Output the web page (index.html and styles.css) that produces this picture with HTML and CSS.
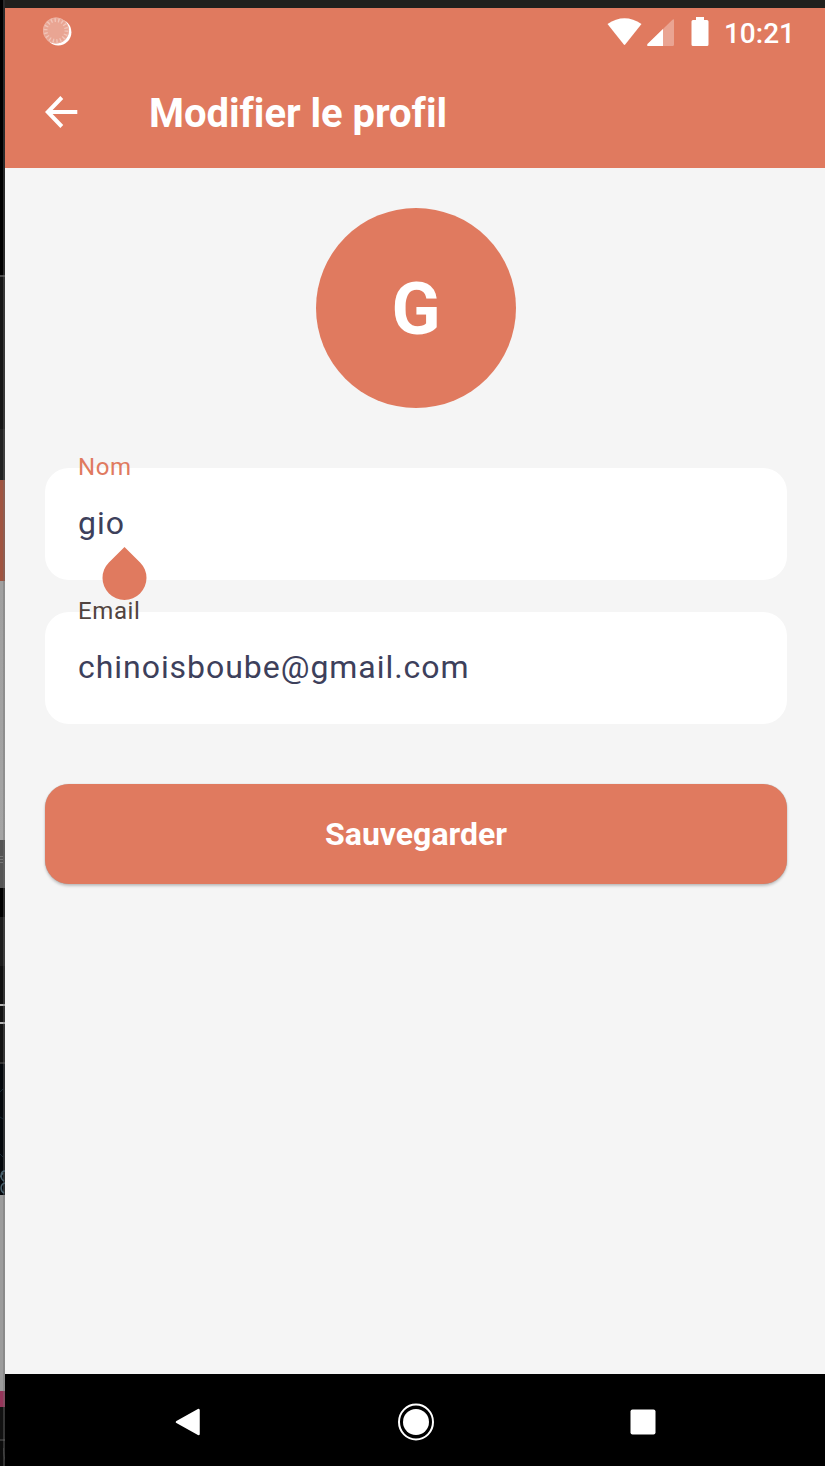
FILE: index.html
```html
<!DOCTYPE html>
<html lang="fr">
<head>
<meta charset="utf-8">
<title>Modifier le profil</title>
<link rel="stylesheet" href="styles.css">
</head>
<body>
<div class="desktop">
  <div class="backdrop">
    <svg class="backdrop-detail" width="5" height="1466" fill="none">
      <path d="M0 856.500h3M0 859.500h3M0 862.500h3" stroke="#777"/>
      <path d="M5 1171c-5 0-5 8-1 10M5 1183c-5 1-5 8-1 10M0 1177l3-4" stroke="#49616d" stroke-width="1.500"/>
      <path d="M0 1092l3-3M0 1117l3 2M0 1154l3 3" stroke="#172730"/>
      <path d="M3.500 1448C3.500 1457 5 1462 9 1466" stroke="#444"/>
    </svg>
  </div>
  <div class="phone">
    <div class="bezel"></div>
    <header class="top">
      <div class="status">
        <svg class="sync" width="30" height="30" viewBox="0 0 30 30">
          <circle cx="15.200" cy="15.200" r="13.200" fill="#fff"/>
          <circle cx="13" cy="13.500" r="13" fill="#e9a593"/>
          <circle cx="13" cy="13.500" r="10.500" fill="none" stroke="#f1c5b9" stroke-width="4" stroke-dasharray="1.400 2.265"/>
          <circle cx="13" cy="13.500" r="12.600" fill="none" stroke="#edb5a6" stroke-width=".8"/>
        </svg>
        <svg class="signals" width="104" height="32" viewBox="0 0 104 32">
          <path d="M.5 7Q17.500-4.500 34.500 7L18.200 27.500q-.7.800-1.400 0Z" fill="#fff"/>
          <path d="M67 3.200Q67 1.500 65.500 2.800L40.500 27q-1 2 .5 2H65.500q1.500 0 1.500-1.500Z" fill="#fff" fill-opacity=".32"/>
          <path d="M56 12L40.500 27q-1 2 .5 2H56Z" fill="#fff"/>
          <path d="M89 0h8v3h3q1.500 0 1.500 1.500v23q0 1.500-1.500 1.500H86q-1.500 0-1.500-1.500v-23Q84.500 3 86 3h3Z" fill="#fff"/>
        </svg>
        <span class="time">10:21</span>
      </div>
      <div class="toolbar">
        <svg class="back" width="34" height="34" viewBox="0 0 34 34" fill="none" stroke="#fff" stroke-width="4">
          <path d="M33.300 17H5M17.800 2.500L3.800 17 17.800 31.500"/>
        </svg>
        <h1 class="title">Modifier le profil</h1>
      </div>
    </header>
    <main class="content">
      <div class="avatar">G</div>
      <div class="field">
        <span class="label label-active">Nom</span>
        <span class="value">gio</span>
        <svg class="cursor-handle" width="45" height="54" viewBox="0 0 45 54"><path d="M22.500 0L38.100 15.400A22 22 0 1 1 6.900 15.400Z" fill="#e07a5f"/></svg>
      </div>
      <div class="field">
        <span class="label">Email</span>
        <span class="value">chinoisboube@gmail.com</span>
      </div>
      <button class="save">Sauvegarder</button>
    </main>
    <nav class="nav">
      <svg width="26" height="28" viewBox="0 0 26 28"><path d="M2 14L23.500 2V26Z" fill="#fff" stroke="#fff" stroke-width="2.500" stroke-linejoin="round"/></svg>
      <svg width="38" height="38" viewBox="0 0 38 38"><ellipse cx="19" cy="19" rx="17" ry="17.500" fill="none" stroke="#fff" stroke-width="2"/><circle cx="19" cy="19" r="13" fill="#fff"/></svg>
      <svg width="26" height="26" viewBox="0 0 26 26"><rect x=".5" y=".5" width="25" height="25" rx="2" fill="#fff"/></svg>
    </nav>
  </div>
</div>
</body>
</html>
```

FILE: styles.css
```css
* { box-sizing: border-box; }
body {
  margin: 0;
  font-family: Roboto, "Liberation Sans", sans-serif;
  background: #000;
}
.desktop {
  display: grid;
  grid-template-columns: 5px 1fr;
  height: 1466px;
  overflow: hidden;
}
.backdrop {
  background:
    linear-gradient(90deg, transparent 3px, rgba(110, 110, 110, .38) 3px),
    linear-gradient(#000 275px, #4a4a4a 275px 277px, #161616 277px 429px, #222 429px 480px,
      #a05440 480px 581px, #a0a0a0 581px, #a4a4a4 840px, #555 840px 888px, #000 888px 917px,
      #1c1c1c 917px 966px, #101010 966px 1004px, #b5b5b5 1004px 1006px, #131313 1006px 1022px,
      #b5b5b5 1022px 1024px, #131313 1024px 1062px, #333 1062px 1064px, #04080c 1064px 1195px,
      #9c9c9c 1195px 1391px, #953459 1391px 1407px, #111 1407px 1439px, #333 1439px 1441px, #0c0c0c 1441px);
}
.backdrop-detail { display: block; }
.phone {
  display: flex;
  flex-direction: column;
  background: #f5f5f5;
  min-width: 0;
}
.bezel { height: 8px; background: #21201d; }
.top { height: 160px; background: #e07a5f; color: #fff; }
.status {
  display: flex;
  align-items: flex-start;
  height: 48px;
  padding: 9px 30px 0 38px;
}
.signals { margin-left: auto; }
.time {
  margin-left: 13px;
  font-size: 28px;
  font-weight: 500;
  line-height: 33px;
}
.toolbar {
  display: flex;
  align-items: center;
  height: 112px;
  padding: 0 0 0 39px;
}
.back { margin-top: -1px; }
.title {
  margin: 3px 0 0 71px;
  font-size: 40px;
  font-weight: 700;
  line-height: 48px;
  letter-spacing: -.03px;
}
.content {
  flex: 1;
  display: flex;
  flex-direction: column;
  padding: 40px 38px 0 40px;
}
.avatar {
  display: flex;
  align-items: center;
  justify-content: center;
  align-self: center;
  width: 200px;
  height: 200px;
  margin-bottom: 60px;
  padding-top: 2px;
  border-radius: 50%;
  background: #e07a5f;
  color: #fff;
  font-size: 72px;
  font-weight: 700;
}
.field {
  position: relative;
  display: flex;
  align-items: center;
  height: 111.5px;
  margin-bottom: 32.5px;
  padding: 0 0 2px 33px;
  border-radius: 24px;
  background: #fff;
}
.label {
  position: absolute;
  left: 33px;
  top: -15px;
  color: #51443f;
  font-size: 24px;
  line-height: 28px;
  letter-spacing: .6px;
}
.label-active { color: #e07a5f; }
.value {
  color: #3d405b;
  font-size: 32px;
  line-height: 40px;
  letter-spacing: .96px;
}
.cursor-handle {
  position: absolute;
  left: 57px;
  top: 79px;
  z-index: 1;
}
.save {
  height: 100px;
  margin-top: 27.500px;
  border: 0;
  border-radius: 24px;
  background: #e07a5f;
  box-shadow: 0 2px 3px rgba(0, 0, 0, .22), 0 0 1px rgba(0, 0, 0, .25);
  color: #fff;
  font: 700 32px Roboto, "Liberation Sans", sans-serif;
}
.nav {
  display: flex;
  align-items: center;
  justify-content: space-between;
  height: 92px;
  padding: 4px 169px 0 170px;
  background: #000;
}
```
